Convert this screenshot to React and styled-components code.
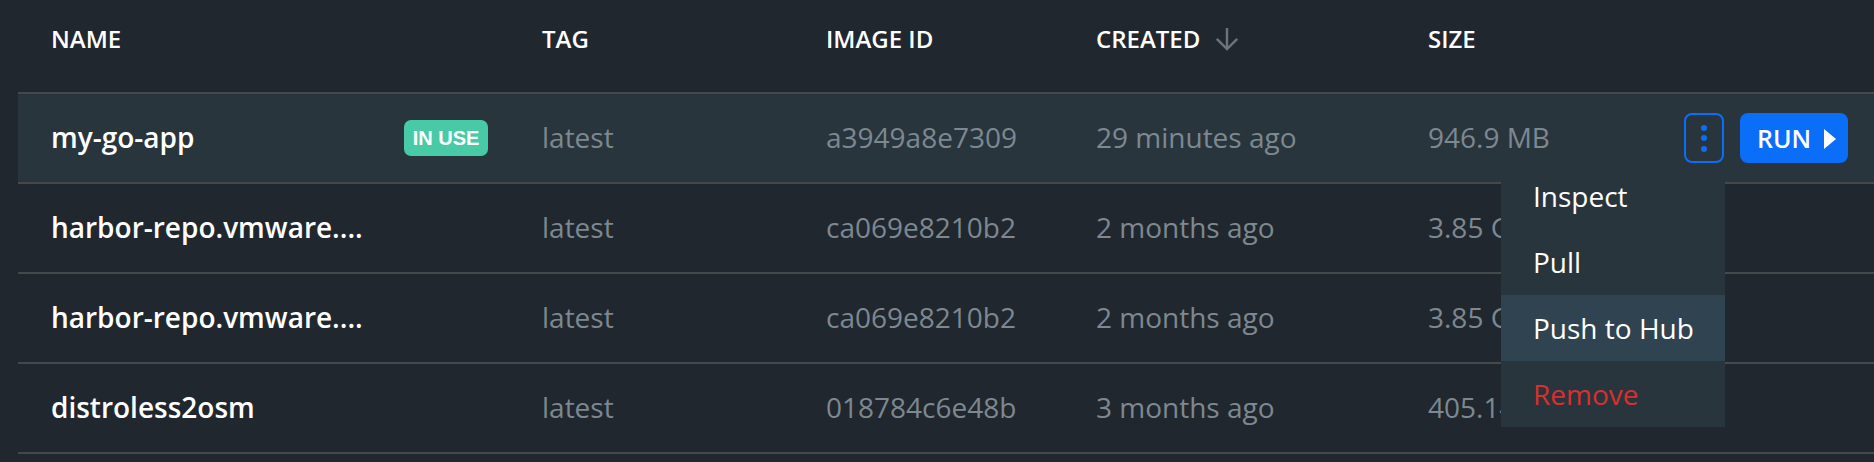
import React from "react";
import styled, { createGlobalStyle } from "styled-components";

const images = [
  {
    name: "my-go-app",
    inUse: true,
    tag: "latest",
    id: "a3949a8e7309",
    created: "29 minutes ago",
    size: "946.9 MB",
  },
  {
    name: "harbor-repo.vmware....",
    tag: "latest",
    id: "ca069e8210b2",
    created: "2 months ago",
    size: "3.85 GB",
  },
  {
    name: "harbor-repo.vmware....",
    tag: "latest",
    id: "ca069e8210b2",
    created: "2 months ago",
    size: "3.85 GB",
  },
  {
    name: "distroless2osm",
    tag: "latest",
    id: "018784c6e48b",
    created: "3 months ago",
    size: "405.14 MB",
  },
];

const menuItems = [
  { label: "Inspect" },
  { label: "Pull" },
  { label: "Push to Hub", hover: true },
  { label: "Remove", danger: true },
];

function SortArrow() {
  return (
    <ArrowIcon width="24" height="24" viewBox="0 0 24 24" fill="none">
      <path
        d="M12 1 V22 M1.8 11.8 L12 22 L22.2 11.8"
        stroke="#6b757e"
        strokeWidth="2.4"
      />
    </ArrowIcon>
  );
}

function App() {
  return (
    <>
      <GlobalStyle />
      <Page>
        <Table>
          <HeaderRow>
            <HeadCell>NAME</HeadCell>
            <HeadCell>TAG</HeadCell>
            <HeadCell>IMAGE ID</HeadCell>
            <HeadCell>
              CREATED
              <SortArrow />
            </HeadCell>
            <HeadCell>SIZE</HeadCell>
            <HeadCell />
          </HeaderRow>

          {images.map((img, i) => (
            <Row key={i} $active={i === 0}>
              <NameCell>
                <span>{img.name}</span>
                {img.inUse && <Badge>IN USE</Badge>}
              </NameCell>
              <Cell>{img.tag}</Cell>
              <Cell>{img.id}</Cell>
              <Cell>{img.created}</Cell>
              <Cell>{img.size}</Cell>
              <ActionsCell>
                {i === 0 && (
                  <>
                    <KebabWrap>
                      <KebabButton>
                        <Dot />
                        <Dot />
                        <Dot />
                      </KebabButton>
                      <Menu>
                        {menuItems.map((item) => (
                          <MenuItem
                            key={item.label}
                            $hover={item.hover}
                            $danger={item.danger}
                          >
                            {item.label}
                          </MenuItem>
                        ))}
                      </Menu>
                    </KebabWrap>
                    <RunButton>
                      RUN
                      <Play />
                    </RunButton>
                  </>
                )}
              </ActionsCell>
            </Row>
          ))}
        </Table>
      </Page>
    </>
  );
}

export default App;

const GlobalStyle = createGlobalStyle`
  body {
    margin: 0;
    background: #21272e;
    font-family: "Open Sans", "DejaVu Sans", sans-serif;
  }
`;

const Page = styled.div`
  height: 462px;
  padding-left: 18px;
  overflow: hidden;
  background: #21272e;
`;

const Table = styled.div`
  display: flex;
  flex-direction: column;
`;

const columns = "491px 284px 270px 332px 1fr auto";

const HeaderRow = styled.div`
  display: grid;
  grid-template-columns: ${columns};
  height: 92px;
  border-bottom: 2px solid #46494c;
`;

const HeadCell = styled.div`
  display: flex;
  align-items: flex-start;
  padding: 22px 0 0 33px;
  font-size: 24px;
  line-height: 34px;
  font-weight: 600;
  color: #ffffff;
`;

const ArrowIcon = styled.svg`
  margin: 5px 0 0 15px;
`;

const Row = styled.div`
  display: grid;
  grid-template-columns: ${columns};
  height: 88px;
  border-bottom: 2px solid #46494c;
  background: ${(p) => (p.$active ? "#29353d" : "transparent")};
`;

const Cell = styled.div`
  display: flex;
  align-items: center;
  padding: 0 0 2px 33px;
  font-size: 28px;
  color: #7d8891;
  white-space: nowrap;
`;

const NameCell = styled(Cell)`
  justify-content: space-between;
  padding-right: 21px;
  font-weight: 600;
  color: #ffffff;
`;

const Badge = styled.span`
  display: inline-flex;
  align-items: center;
  justify-content: center;
  width: 84px;
  height: 36px;
  margin-top: 2px;
  border-radius: 7px;
  background: #48caa7;
  color: #ffffff;
  font-family: "Liberation Sans", Arial, sans-serif;
  font-weight: 700;
  font-size: 20px;
`;

const ActionsCell = styled.div`
  display: flex;
  align-items: center;
  justify-content: flex-end;
  gap: 16px;
  padding-right: 26px;
`;

const KebabWrap = styled.div`
  position: relative;
`;

const KebabButton = styled.button`
  display: flex;
  flex-direction: column;
  align-items: center;
  justify-content: center;
  gap: 4.5px;
  width: 40px;
  height: 50px;
  padding: 0;
  border: 2px solid #0b6ef9;
  border-radius: 8px;
  background: transparent;
`;

const Dot = styled.span`
  width: 6px;
  height: 6px;
  border-radius: 50%;
  background: #0b6ef9;
`;

const RunButton = styled.button`
  display: flex;
  align-items: center;
  gap: 13px;
  width: 108px;
  height: 50px;
  padding: 0 0 0 17px;
  border: none;
  border-radius: 8px;
  background: #0b6ef9;
  color: #ffffff;
  font-family: "Open Sans", sans-serif;
  font-size: 25px;
  font-weight: 600;
`;

const Play = styled.span`
  width: 0;
  height: 0;
  border-top: 10px solid transparent;
  border-bottom: 10px solid transparent;
  border-left: 12px solid #ffffff;
  margin-top: 2px;
`;

const Menu = styled.div`
  position: absolute;
  top: 100%;
  right: -1px;
  width: 224px;
  background: #29353d;
  z-index: 10;
`;

const MenuItem = styled.div`
  display: flex;
  align-items: center;
  height: 66px;
  padding-left: 32px;
  font-size: 28px;
  color: ${(p) => (p.$danger ? "#d63031" : "#ffffff")};
  background: ${(p) => (p.$hover ? "#2f4350" : "transparent")};
`;
